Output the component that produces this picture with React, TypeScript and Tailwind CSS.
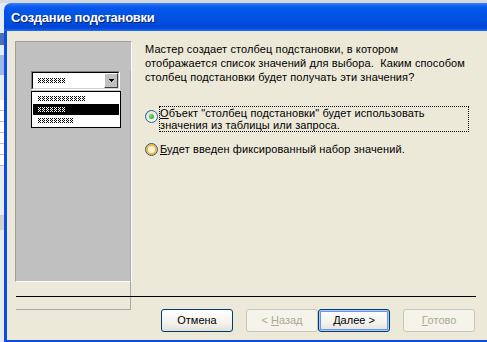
import React from "react";

const Pix = ({ n }: { n: number }) => {
  const cells: [number, number][] = [
    [0, 0], [2, 0], [1, 1], [0, 2], [2, 2], [1, 3], [0, 4], [2, 4],
  ];
  return (
    <svg width={n * 4 - 1} height={5} className="block" shapeRendering="crispEdges">
      {Array.from({ length: n }).map((_, i) =>
        cells.map(([x, y], j) => (
          <rect key={i + "-" + j} x={i * 4 + x} y={y} width="1" height="1" fill="currentColor" />
        ))
      )}
    </svg>
  );
};

const Radio = ({ checked, hover }: { checked?: boolean; hover?: boolean }) => (
  <span
    className={
      "relative inline-flex h-[13px] w-[13px] shrink-0 items-center justify-center rounded-full border border-[#2a5f8f] " +
      (hover
        ? "bg-[#fff4d6] shadow-[inset_0_0_0_2px_#f7b43a]"
        : "bg-[linear-gradient(135deg,#dcdcd5,#ffffff)]")
    }
  >
    {checked && (
      <span className="h-[5px] w-[5px] rounded-full bg-[radial-gradient(circle_at_35%_35%,#6ee36a,#21a121)]" />
    )}
  </span>
);

const Btn = ({
  children,
  disabled,
  isDefault,
}: {
  children: React.ReactNode;
  disabled?: boolean;
  isDefault?: boolean;
}) => (
  <div
    className={
      "flex h-[23px] w-[72px] items-center justify-center rounded-[3px] border text-[11px] " +
      (disabled
        ? "border-[#c9c7ba] bg-[#f5f4ea] text-[#aca899]"
        : "border-[#003c74] bg-[linear-gradient(to_bottom,#ffffff_0%,#f4f3ee_60%,#e3e0d5_100%)] text-black") +
      (isDefault ? " shadow-[inset_0_0_0_1px_#aecbf6,inset_0_0_0_2px_#6d93e6]" : "")
    }
  >
    {children}
  </div>
);

export default function App() {
  return (
    <div
      className="relative h-[342px] w-[487px] overflow-hidden bg-[#e6ecf5]"
      style={{ fontFamily: '"Liberation Sans", Arial, sans-serif' }}
    >
      {/* background strips */}
      <div className="absolute left-0 top-0 h-[3px] w-full bg-[#d4d8e0]" />
      <div className="absolute left-0 top-[33px] h-[12px] w-[4px] bg-[#4a6fb8]" />
      <div className="absolute left-0 top-[55px] h-[20px] w-[4px] bg-[#9db8e6]" />
      <div className="absolute left-0 top-[100px] flex w-[4px] flex-col">
        {[0, 1, 2, 3, 4, 5].map((i) => (
          <div key={i} className="h-[11px] border-b border-[#b8bcc4] bg-white" />
        ))}
      </div>
      <div className="absolute left-0 top-[215px] h-[15px] w-[4px] bg-[#d0d0d0]" />

      {/* dialog window */}
      <div className="absolute left-[4px] top-[3px] flex h-[339px] w-[510px] flex-col">
        <div className="flex h-[28px] items-center rounded-tl-[7px] bg-[linear-gradient(to_bottom,#3c84f6_0%,#1262f2_10%,#0456e8_22%,#0050e2_60%,#0046d6_86%,#0a56e8_94%,#2470f0_100%)] pl-[7px]">
          <span className="mt-[1px] text-[13px] font-bold tracking-[-0.25px] text-white [text-shadow:1px_1px_0_#0a1e6e]">
            Создание подстановки
          </span>
        </div>
        <div className="flex flex-1 flex-col border-b-[2px] border-l-[3px] border-[#0a4de0] bg-[#ece9d8]">
          <div className="flex">
            {/* left picture panel */}
            <div className="ml-[8px] mt-[10px] h-[241px] w-[117px] border border-b-white border-l-[#a0a0a0] border-r-white border-t-[#a0a0a0] bg-[#c0c0c0]">
              <div className="h-[239px] w-[115px] border-b border-r border-[#a8a8a8]">
                <div className="ml-[15px] mt-[29px] w-[90px]">
                  <div className="flex h-[19px] w-[89px] border border-b-white border-l-[#808080] border-r-white border-t-[#808080]">
                    <div className="flex flex-1 items-center border border-b-[#d4d0c8] border-l-black border-r-[#d4d0c8] border-t-black bg-white">
                      <div className="flex-1 pl-[5px] text-black">
                        <Pix n={7} />
                      </div>
                      <div className="flex h-[15px] w-[14px] items-center justify-center border border-b-[#404040] border-l-white border-r-[#404040] border-t-white bg-[#c0c0c0]">
                        <svg width="5" height="3" shapeRendering="crispEdges">
                          <path d="M0 0h5v1H0zM1 1h3v1H1zM2 2h1v1H2z" fill="#000" />
                        </svg>
                      </div>
                    </div>
                  </div>
                  <div className="mt-[1px] flex h-[37px] w-[90px] flex-col border border-black bg-white p-[1px]">
                    <div className="flex h-[11px] items-center pl-[5px] text-black">
                      <Pix n={12} />
                    </div>
                    <div className="flex h-[11px] items-center bg-black pl-[5px] text-white">
                      <Pix n={7} />
                    </div>
                    <div className="flex h-[11px] items-center pl-[5px] text-black">
                      <Pix n={9} />
                    </div>
                  </div>
                </div>
              </div>
            </div>

            {/* right column */}
            <div className="ml-[13px] mt-[11px] flex flex-col text-[11px] tracking-[0.1px] text-black">
              <div className="whitespace-nowrap leading-[14px]">
                Мастер создает столбец подстановки, в котором
                <br />
                отображается список значений для выбора.&nbsp; Каким способом
                <br />
                столбец подстановки будет получать эти значения?
              </div>
              <div className="mt-[22px] flex items-start">
                <div className="mt-[1px]">
                  <Radio checked />
                </div>
                <div className="ml-[1px] w-[310px] whitespace-nowrap border border-dotted border-black leading-[12px]">
                  <span className="underline">О</span>бъект "столбец подстановки" будет использовать
                  <br />
                  значения из таблицы или запроса.
                </div>
              </div>
              <div className="mt-[10px] flex items-center leading-[14px]">
                <Radio hover />
                <span className="ml-[2px] whitespace-nowrap">
                  <span className="underline">Б</span>удет введен фиксированный набор значений.
                </span>
              </div>
            </div>
          </div>

          {/* separator */}
          <div className="ml-[9px] mt-[14px] h-[1px] w-[460px] bg-black" />

          {/* buttons */}
          <div className="ml-[154px] mt-[12px] flex">
            <Btn>Отмена</Btn>
            <div className="ml-[13px] flex">
              <Btn disabled>
                &lt; <span className="ml-[3px] underline">Н</span>азад
              </Btn>
              <Btn isDefault>
                <span className="underline">Д</span>алее &gt;
              </Btn>
            </div>
            <div className="ml-[13px]">
              <Btn disabled>
                <span className="underline">Г</span>отово
              </Btn>
            </div>
          </div>
        </div>
      </div>
    </div>
  );
}
